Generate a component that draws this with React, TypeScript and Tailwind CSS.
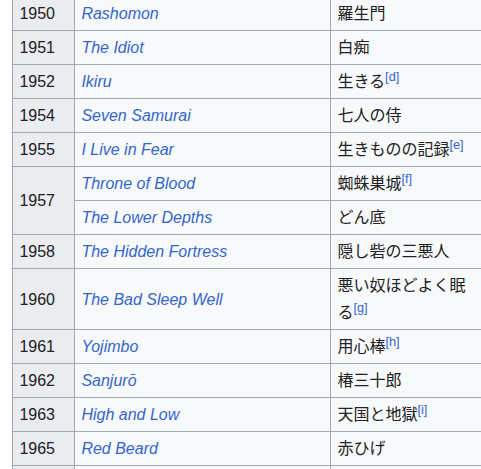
import React from 'react';

type Film = { title: string; jp: string; note?: string };
type YearGroup = { year: string; films: Film[] };

const rows: YearGroup[] = [
  { year: '1950', films: [{ title: 'Rashomon', jp: '羅生門' }] },
  { year: '1951', films: [{ title: 'The Idiot', jp: '白痴' }] },
  { year: '1952', films: [{ title: 'Ikiru', jp: '生きる', note: 'd' }] },
  { year: '1954', films: [{ title: 'Seven Samurai', jp: '七人の侍' }] },
  { year: '1955', films: [{ title: 'I Live in Fear', jp: '生きものの記録', note: 'e' }] },
  {
    year: '1957',
    films: [
      { title: 'Throne of Blood', jp: '蜘蛛巣城', note: 'f' },
      { title: 'The Lower Depths', jp: 'どん底' },
    ],
  },
  { year: '1958', films: [{ title: 'The Hidden Fortress', jp: '隠し砦の三悪人' }] },
  { year: '1960', films: [{ title: 'The Bad Sleep Well', jp: '悪い奴ほどよく眠る', note: 'g' }] },
  { year: '1961', films: [{ title: 'Yojimbo', jp: '用心棒', note: 'h' }] },
  { year: '1962', films: [{ title: 'Sanjurō', jp: '椿三十郎' }] },
  { year: '1963', films: [{ title: 'High and Low', jp: '天国と地獄', note: 'i' }] },
  { year: '1965', films: [{ title: 'Red Beard', jp: '赤ひげ' }] },
  { year: '1970', films: [{ title: "Dodes'ka-den", jp: 'どですかでん' }] },
  { year: '1975', films: [{ title: 'Dersu Uzala', jp: 'デルス・ウザーラ' }] },
];

const cell = 'border border-[#a2a9b1] px-[6.4px] py-[3px] align-middle';

export default function App() {
  return (
    <div
      className="w-[481px] h-[469px] overflow-hidden bg-white text-[16px] leading-[27px] text-[#202122]"
      style={{ fontFamily: '"Liberation Sans", "Noto Sans CJK JP", sans-serif' }}
    >
      <table className="ml-[12px] -mt-[4px] table-fixed border-collapse w-[473px]">
        <colgroup>
          <col className="w-[62px]" />
          <col className="w-[256px]" />
          <col className="w-[155px]" />
        </colgroup>
        <tbody>
          {rows.map((g) =>
            g.films.map((f, i) => (
              <tr key={g.year + f.title}>
                {i === 0 && (
                  <th
                    rowSpan={g.films.length}
                    className={`${cell} bg-[#eaecf0] text-left font-normal`}
                  >
                    {g.year}
                  </th>
                )}
                <td className={`${cell} bg-[#f8f9fa]`}>
                  <i className="text-[#3366cc]">{f.title}</i>
                </td>
                <td className={`${cell} bg-[#f8f9fa]`}>
                  {f.jp}
                  {f.note && (
                    <sup className="text-[0.8em] leading-none align-super top-0 text-[#3366cc]">
                      [{f.note}]
                    </sup>
                  )}
                </td>
              </tr>
            ))
          )}
        </tbody>
      </table>
    </div>
  );
}
